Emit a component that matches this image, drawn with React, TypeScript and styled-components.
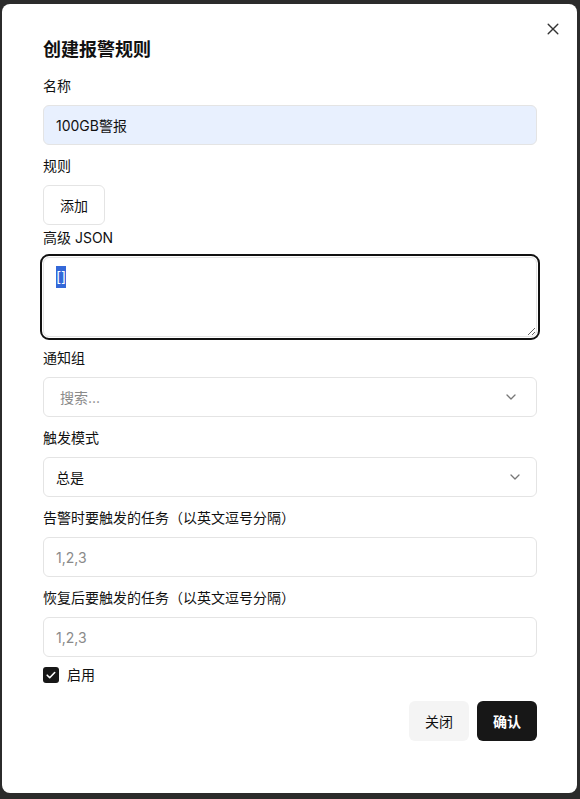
import { useEffect, useRef } from 'react';
import styled, { createGlobalStyle } from 'styled-components';

const GlobalStyle = createGlobalStyle`
  * {
    box-sizing: border-box;
  }
  html, body {
    margin: 0;
    background: #2b2b2b;
  }
  body {
    font-family: Inter, 'Noto Sans CJK SC', sans-serif;
    color: #111;
  }
  ::selection {
    background: #3468d8;
    color: #fff;
  }
`;

const Overlay = styled.div`
  padding: 4px 3px 6px 2px;
  min-height: 799px;
`;

const Dialog = styled.div`
  position: relative;
  background: #fff;
  border-radius: 8px;
  padding: 32px 40px 52px 41px;
  display: flex;
  flex-direction: column;
`;

const CloseButton = styled.button`
  position: absolute;
  top: 17px;
  right: 16px;
  width: 16px;
  height: 16px;
  padding: 0;
  border: none;
  background: transparent;
  display: flex;
  align-items: center;
  justify-content: center;
  color: #333;
  cursor: pointer;
`;

const Title = styled.h2`
  margin: 0 0 11px;
  font-size: 18px;
  line-height: 28px;
  font-weight: 700;
`;

const Field = styled.div<{ $gap?: number }>`
  display: flex;
  flex-direction: column;
  gap: 8px;
  margin-bottom: ${p => (p.$gap ?? 10)}px;
`;

const Label = styled.label`
  font-size: 14px;
  line-height: 22px;
  color: #111;
`;

const Input = styled.input<{ $filled?: boolean }>`
  height: 40px;
  width: 100%;
  border: 1px solid #e4e4e4;
  border-radius: 6px;
  padding: 0 12px;
  font: inherit;
  font-size: 14px;
  color: #111;
  background: ${p => (p.$filled ? '#e8f0fe' : '#fff')};
  outline: none;
  &::placeholder {
    color: #8a8a8a;
  }
`;

const OutlineButton = styled.button`
  align-self: flex-start;
  height: 40px;
  padding: 0 16px;
  border: 1px solid #e4e4e4;
  border-radius: 6px;
  background: #fff;
  font: inherit;
  font-size: 14px;
  color: #111;
`;

const TextArea = styled.textarea`
  width: 100%;
  height: 80px;
  border: 1px solid #e4e4e4;
  border-radius: 6px;
  padding: 8px 12px;
  font: inherit;
  font-size: 14px;
  line-height: 22px;
  color: #111;
  outline: 2px solid #111;
  outline-offset: 1px;
  resize: vertical;
`;

const Select = styled.div<{ $search?: boolean }>`
  height: 40px;
  border: 1px solid #e4e4e4;
  border-radius: 6px;
  padding: 0 12px 0 ${p => (p.$search ? 16 : 12)}px;
  display: flex;
  align-items: center;
  justify-content: space-between;
  font-size: 14px;
`;

const SelectValue = styled.span<{ $placeholder?: boolean }>`
  color: ${p => (p.$placeholder ? '#8a8a8a' : '#111')};
`;

const Chevron = styled.svg<{ $right: number }>`
  margin-right: ${p => p.$right}px;
  color: #777;
`;

const CheckRow = styled.label`
  display: flex;
  align-items: center;
  gap: 8px;
  font-size: 14px;
  line-height: 20px;
  margin-top: -2px;
`;

const CheckBox = styled.span`
  width: 16px;
  height: 16px;
  border-radius: 3px;
  background: #171717;
  display: flex;
  align-items: center;
  justify-content: center;
`;

const Footer = styled.div`
  display: flex;
  justify-content: flex-end;
  gap: 8px;
  margin-top: 16px;
`;

const FooterButton = styled.button<{ $primary?: boolean }>`
  height: 40px;
  width: 60px;
  border: none;
  border-radius: 6px;
  font: inherit;
  font-size: 14px;
  font-weight: ${p => (p.$primary ? 700 : 400)};
  background: ${p => (p.$primary ? '#171717' : '#f4f4f4')};
  color: ${p => (p.$primary ? '#fff' : '#111')};
`;

const ChevronIcon = ({ right }: { right: number }) => (
  <Chevron $right={right} width='10' height='6' viewBox='0 0 10 6' fill='none'>
    <path d='M1 1l4 4 4-4' stroke='currentColor' strokeWidth='1.3' strokeLinecap='round' strokeLinejoin='round' />
  </Chevron>
);

const App = () => {
  const jsonRef = useRef<HTMLTextAreaElement>(null);

  useEffect(() => {
    const el = jsonRef.current;
    if (el) {
      el.focus();
      el.setSelectionRange(0, el.value.length);
    }
  }, []);

  return (
    <>
      <GlobalStyle />
      <Overlay>
        <Dialog>
          <CloseButton aria-label='close'>
            <svg width='12' height='12' viewBox='0 0 12 12'>
              <path d='M1.2 1.2l9.6 9.6M10.8 1.2l-9.6 9.6' stroke='currentColor' strokeWidth='1.4' strokeLinecap='round' />
            </svg>
          </CloseButton>
          <Title>创建报警规则</Title>

          <Field>
            <Label>名称</Label>
            <Input $filled defaultValue='100GB警报' />
          </Field>

          <Field $gap={2}>
            <Label>规则</Label>
            <OutlineButton>添加</OutlineButton>
          </Field>

          <Field>
            <Label>高级 JSON</Label>
            <TextArea ref={jsonRef} defaultValue='[]' />
          </Field>

          <Field>
            <Label>通知组</Label>
            <Select $search>
              <SelectValue $placeholder>搜索...</SelectValue>
              <ChevronIcon right={8} />
            </Select>
          </Field>

          <Field>
            <Label>触发模式</Label>
            <Select>
              <SelectValue>总是</SelectValue>
              <ChevronIcon right={4} />
            </Select>
          </Field>

          <Field>
            <Label>告警时要触发的任务（以英文逗号分隔）</Label>
            <Input placeholder='1,2,3' />
          </Field>

          <Field>
            <Label>恢复后要触发的任务（以英文逗号分隔）</Label>
            <Input placeholder='1,2,3' />
          </Field>

          <CheckRow>
            <CheckBox>
              <svg width='12' height='12' viewBox='0 0 12 12' fill='none'>
                <path d='M2.2 6.2l2.5 2.5 5-5.2' stroke='#fff' strokeWidth='1.6' strokeLinecap='round' strokeLinejoin='round' />
              </svg>
            </CheckBox>
            启用
          </CheckRow>

          <Footer>
            <FooterButton>关闭</FooterButton>
            <FooterButton $primary>确认</FooterButton>
          </Footer>
        </Dialog>
      </Overlay>
    </>
  );
};

export default App;
